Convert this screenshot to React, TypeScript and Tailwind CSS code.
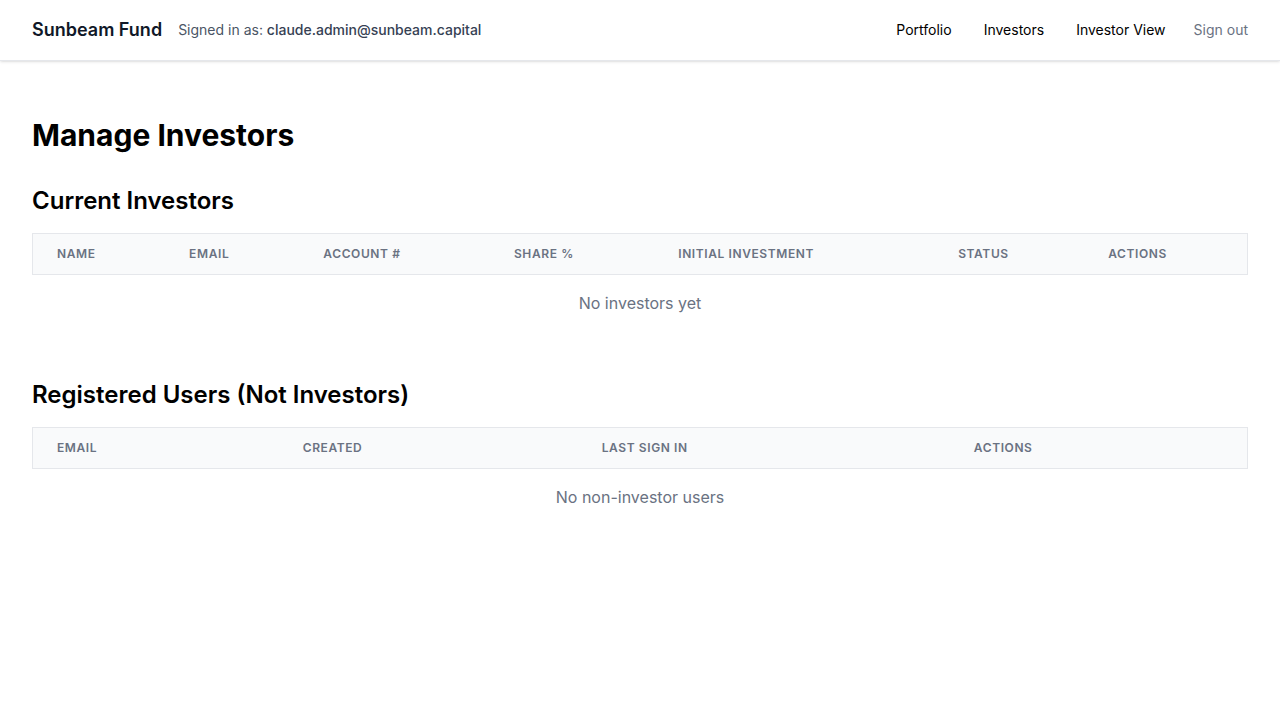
import React from "react";

const investorCols = ["Name", "Email", "Account #", "Share %", "Initial Investment", "Status", "Actions"];
const userCols = ["Email", "Created", "Last Sign In", "Actions"];

function EmptyTable({ cols, empty }: { cols: string[]; empty: string }) {
  return (
    <table className="w-full border-collapse">
      <thead>
        <tr className="border border-gray-200 bg-gray-50">
          {cols.map((c) => (
            <th
              key={c}
              className="px-6 py-3 text-left text-xs font-semibold uppercase tracking-wider text-gray-500"
            >
              {c}
            </th>
          ))}
        </tr>
      </thead>
      <tbody>
        <tr>
          <td colSpan={cols.length} className="py-4 text-center text-base text-gray-500">
            {empty}
          </td>
        </tr>
      </tbody>
    </table>
  );
}

export default function App() {
  return (
    <div className="min-h-screen bg-white text-black" style={{ fontFamily: "Inter, 'Noto Sans', sans-serif" }}>
      <header className="flex h-[61px] items-center justify-between border-b border-gray-200 bg-white px-8 shadow-sm">
        <div className="flex items-center gap-4">
          <span className="text-lg font-semibold text-gray-900">Sunbeam Fund</span>
          <span className="text-sm text-gray-600">
            Signed in as: <span className="font-medium text-gray-700">claude.admin@sunbeam.capital</span>
          </span>
        </div>
        <nav className="flex items-center text-sm">
          <a className="px-4 text-black">Portfolio</a>
          <a className="px-4 text-black">Investors</a>
          <a className="px-4 text-black">Investor View</a>
          <a className="pl-3 text-gray-500">Sign out</a>
        </nav>
      </header>

      <main className="px-8 pt-14">
        <h1 className="mb-8 text-3xl font-bold">Manage Investors</h1>

        <section>
          <h2 className="mb-4 text-2xl font-semibold">Current Investors</h2>
          <EmptyTable cols={investorCols} empty="No investors yet" />
        </section>

        <section className="mt-12">
          <h2 className="mb-4 text-2xl font-semibold">Registered Users (Not Investors)</h2>
          <EmptyTable cols={userCols} empty="No non-investor users" />
        </section>
      </main>
    </div>
  );
}
